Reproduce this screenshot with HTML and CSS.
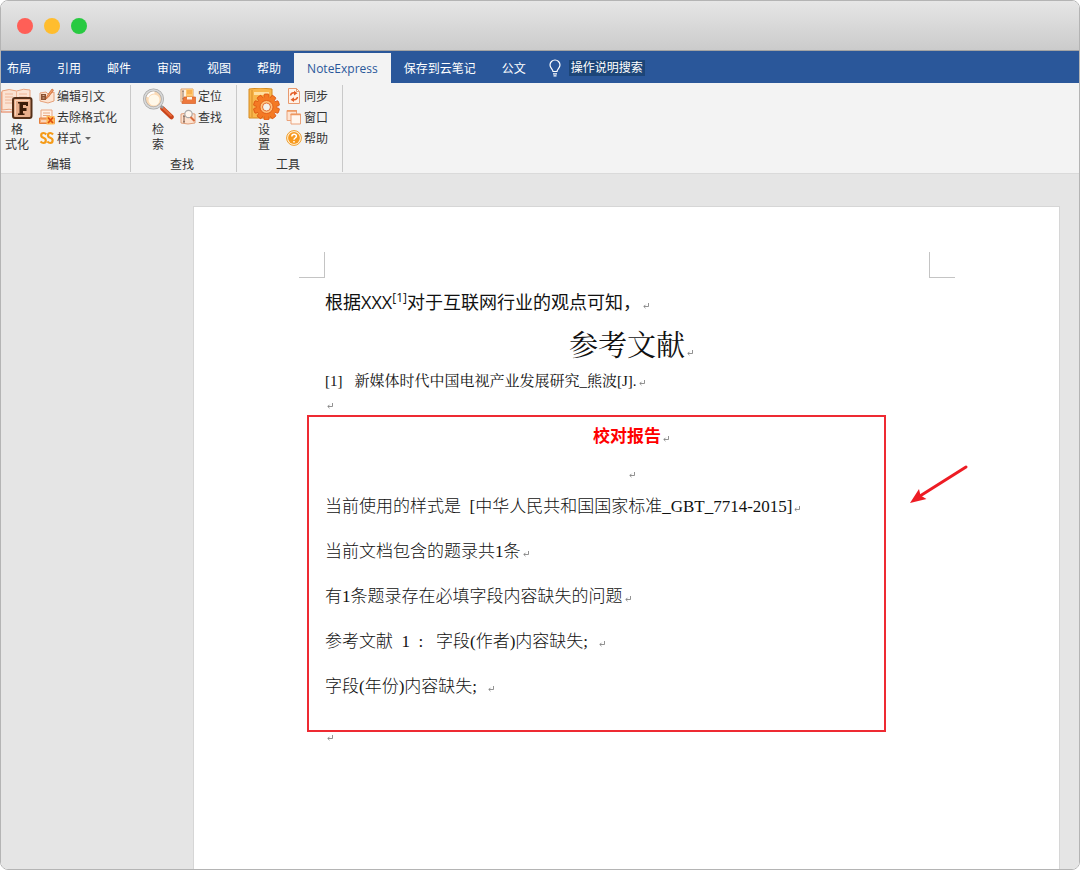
FILE: index.html
```html
<!DOCTYPE html>
<html lang="zh-CN">
<head>
<meta charset="utf-8">
<title>NoteExpress</title>
<link rel="stylesheet" href="styles.css">
</head>
<body>
<svg class="defs" aria-hidden="true">
  <symbol id="ret" viewBox="0 0 6 6"><path d="M5.500 0v3.500H1M2.500 1.800L.8 3.500l1.700 1.700" fill="none" stroke="#777" stroke-width=".8"/></symbol>
</svg>
<div class="window">
  <header class="titlebar">
    <button class="light light-red" aria-label="关闭"></button>
    <button class="light light-yellow" aria-label="最小化"></button>
    <button class="light light-green" aria-label="缩放"></button>
  </header>

  <nav class="tabs">
    <button class="tab tab-first">布局</button>
    <button class="tab">引用</button>
    <button class="tab">邮件</button>
    <button class="tab">审阅</button>
    <button class="tab">视图</button>
    <button class="tab">帮助</button>
    <button class="tab tab-active">NoteExpress</button>
    <button class="tab">保存到云笔记</button>
    <button class="tab">公文</button>
    <button class="tab tell-me">
      <svg width="12" height="18" viewBox="0 0 12 18" fill="none" stroke="#fff" stroke-width="1.200"><path d="M4 12.500c0-2-3-3.500-3-6.500a5 5 0 0 1 10 0c0 3-3 4.500-3 6.500zM4 14.800h4M4.500 16.800h3"/></svg>
      <span class="tell-text">操作说明搜索</span>
    </button>
  </nav>

  <div class="ribbon">
    <section class="group group-edit">
      <div class="tools">
        <button class="big">
          <svg width="32" height="32" viewBox="0 0 32 32">
            <path d="M1 3q7-3 14.500 0Q23 0 29 2v19q-7-1-13.500 2Q8 20 1 22z" fill="#fbe3d3" stroke="#e9a27c"/>
            <path d="M15.500 3v20M4 6h8M4 9h8M4 12h8M4 15h8M18 6h8M18 9h8" stroke="#f0b596" fill="none"/>
            <path d="M0 4v20h11" fill="none" stroke="#e7774a"/>
            <rect x="12" y="10" width="18.500" height="20" rx="2" fill="#e9ae8b" stroke="#553019" stroke-width="2"/>
            <path d="M14.500 27.500v-15H28" fill="none" stroke="#f8d5bc"/>
            <path d="M17 14h10v4h-2v-1h-3v3h3.500v3H22v2.500h1.500V27H17v-1.500h1.500v-10H17z" fill="#3b1b08"/>
          </svg>
          <span>格<br>式化</span>
        </button>
        <div class="stack">
          <button class="small">
            <svg width="16" height="16" viewBox="0 0 16 16"><path d="M1 5l6-1 2 2 6-2v9l-6 2-8-2z" fill="#fde4d2" stroke="#e5a17b"/><path d="M2 6h5v6H2z" fill="#8b5232"/><path d="M3.500 7.500h2M3.500 10h2" stroke="#d9b49c"/><path d="M7 11l1-3 5-7 1.500 1-5 7z" fill="#f1a06b" stroke="#c65c27" stroke-width=".7"/></svg>编辑引文</button>
          <button class="small">
            <svg width="16" height="16" viewBox="0 0 16 16"><path d="M2 1h11v9H2z" fill="#fff1e6" stroke="#e9a57f"/><path d="M4 4h7M4 6.500h7" stroke="#eaa77e"/><path d="M.5 9h15v5.500H.5z" fill="#f7a870" stroke="#e47f3d"/><path d="M2 12h6" stroke="#fff"/><path d="M7.500 7h8v8.500h-8z" fill="#ffbd57"/><path d="M9 8.500l5 5.500M14 8.500L9 14" stroke="#df4d12" stroke-width="1.800"/></svg>去除格式化</button>
          <button class="small">
            <svg width="16" height="16" viewBox="0 0 16 16" fill="none" stroke="#f59b18" stroke-width="2.200"><path d="M7.200 4.500Q6 3 4.500 3 2.200 3 2.200 5.200q0 1.800 2.300 2.600t2.300 2.700Q6.800 13 4.500 13 3 13 1.500 11.500M14 4.500Q12.800 3 11.300 3 9 3 9 5.200q0 1.800 2.300 2.600t2.300 2.700q0 2.500-2.300 2.500-1.500 0-3-1.500"/></svg>样式<span class="caret"></span></button>
        </div>
      </div>
      <div class="group-name">编辑</div>
    </section>

    <section class="group">
      <div class="tools">
        <button class="big">
          <svg width="32" height="32" viewBox="0 0 32 32"><path d="M20.500 20.500l9 8.500" stroke="#c9441a" stroke-width="4.500" stroke-linecap="round"/><path d="M21.500 20.500l7.500 7" stroke="#e5683a" stroke-width="2" stroke-linecap="round"/><path d="M17 16l4 4" stroke="#999" stroke-width="2.500"/><circle cx="11.500" cy="11" r="9" fill="#fbd9b4" stroke="#a8a8a8" stroke-width="3"/><circle cx="11.500" cy="11" r="9" fill="none" stroke="#d9d9d9" stroke-width="1.500"/><circle cx="12" cy="12" r="5.500" fill="#fff8e9"/><path d="M5.500 9q2-4.500 7-4.500" fill="none" stroke="#fff" stroke-width="2"/></svg>
          <span>检<br>索</span>
        </button>
        <div class="stack">
          <button class="small">
            <svg width="16" height="16" viewBox="0 0 16 16"><path d="M1 1h12v13H1z" fill="#fff0df" stroke="#df9c67"/><path d="M6 1h7v8H6z" fill="#ffc871"/><path d="M3 3v8M2 3h2M2 11h2" stroke="#76523b" stroke-width=".8"/><path d="M7 3h5M7 5h5" stroke="#f49b32"/><path d="M4 9h11.500v6.500H2z" fill="#ed783c" stroke="#d65f24" stroke-width=".7"/><path d="M7 9h5v2.500H7z" fill="#fff2e5"/></svg>定位</button>
          <button class="small">
            <svg width="16" height="16" viewBox="0 0 16 16"><path d="M1 5l6-1 8 1v9l-7 1-7-1z" fill="#fde2cf" stroke="#df9d78"/><path d="M4 7v6M3 7h2M3 13h2" stroke="#765343"/><circle cx="8.500" cy="5" r="3.700" fill="#fff6ed" stroke="#aaa" stroke-width="1.200"/><path d="M10.500 8l4 4" stroke="#d86b3c" stroke-width="2"/></svg>查找</button>
        </div>
      </div>
      <div class="group-name">查找</div>
    </section>

    <section class="group">
      <div class="tools">
        <button class="big">
          <svg width="32" height="32" viewBox="0 0 32 32">
            <path d="M1 1q11-2 23 0v29H1z" fill="#f8b64b" stroke="#d58a20"/>
            <path d="M4 2v27" stroke="#d98c24"/><path d="M6 4h15v3H6z" fill="#ffe0a0"/>
            <g transform="translate(18.500 19)" fill="#f47a24" stroke="#dc5310" stroke-width=".8">
              <rect x="-2.500" y="-13" width="5" height="26" rx="1"/><rect x="-2.500" y="-13" width="5" height="26" rx="1" transform="rotate(36)"/><rect x="-2.500" y="-13" width="5" height="26" rx="1" transform="rotate(72)"/><rect x="-2.500" y="-13" width="5" height="26" rx="1" transform="rotate(108)"/><rect x="-2.500" y="-13" width="5" height="26" rx="1" transform="rotate(144)"/>
              <circle r="10" stroke="none"/><circle r="6.500" fill="#ffc17b"/><circle r="4" fill="#f3f0eb"/>
            </g>
          </svg>
          <span>设<br>置</span>
        </button>
        <div class="stack">
          <button class="small">
            <svg width="16" height="16" viewBox="0 0 16 16"><path d="M2.500.5h8l3 3v12h-11z" fill="#fff2e8" stroke="#e89a70"/><path d="M10.500.5v3h3" fill="none" stroke="#e89a70"/><path d="M4.500 7.500q.5-3 4-2.700M11.500 9q-.5 3-4 2.700" fill="none" stroke="#e45f2a" stroke-width="1.500"/><path d="M8 2.800l3.500 2.400L8 7.500zM8 9.300l-3.500 2.400L8 14z" fill="#e45f2a"/></svg>同步</button>
          <button class="small">
            <svg width="16" height="16" viewBox="0 0 16 16"><path d="M1 1.500h9.500v10H1z" fill="#fde3d1" stroke="#eba27a"/><path d="M5 5h9.500v10H5z" fill="#fff6ef" stroke="#eba27a"/><path d="M1 2h10M4.500 5.500h10" stroke="#ee985f" stroke-width="1.500"/></svg>窗口</button>
          <button class="small">
            <svg width="16" height="16" viewBox="0 0 16 16"><circle cx="8" cy="8" r="7.400" fill="#fff1d8" stroke="#ef9d2b"/><circle cx="8" cy="8" r="5.900" fill="#f79a1f"/><path d="M5.800 6.500q0-2.300 2.300-2.300t2.300 2q0 1-1.200 1.800T8 9.700M8 11v1.500" fill="none" stroke="#fff" stroke-width="1.500"/></svg>帮助</button>
        </div>
      </div>
      <div class="group-name">工具</div>
    </section>
  </div>

  <main class="workspace">
    <article class="page">
      <div class="corners"><span class="corner corner-left"></span><span class="corner corner-right"></span></div>
      <p class="lead">根据XXX<sup>[1]</sup>对于互联网行业的观点可知，<svg class="ret"><use href="#ret"/></svg></p>
      <h1 class="title">参考文献<svg class="ret"><use href="#ret"/></svg></h1>
      <p class="entry"><span class="number">[1]</span>新媒体时代中国电视产业发展研究_熊波[J].<svg class="ret"><use href="#ret"/></svg></p>
      <p class="blank"><svg class="ret"><use href="#ret"/></svg></p>
      <section class="report">
        <h2 class="report-title">校对报告<svg class="ret"><use href="#ret"/></svg></h2>
        <p class="blank blank-center"><svg class="ret"><use href="#ret"/></svg></p>
        <p>当前使用的样式是&nbsp; [中华人民共和国国家标准_GBT_7714-2015]<svg class="ret"><use href="#ret"/></svg></p>
        <p>当前文档包含的题录共1条<svg class="ret"><use href="#ret"/></svg></p>
        <p>有1条题录存在必填字段内容缺失的问题<svg class="ret"><use href="#ret"/></svg></p>
        <p>参考文献&nbsp; 1&nbsp; :&nbsp;&nbsp; 字段(作者)内容缺失;&nbsp; <svg class="ret"><use href="#ret"/></svg></p>
        <p>字段(年份)内容缺失;&nbsp; <svg class="ret"><use href="#ret"/></svg></p>
        <div class="highlight"></div>
        <svg class="arrow" width="58" height="40" viewBox="0 0 58 40"><path d="M56 2L10 31" stroke="#ed1c24" stroke-width="3" stroke-linecap="round"/><path d="M0 38L9 24l1.500 6.500 6 3.500z" fill="#ed1c24"/></svg>
      </section>
      <p class="blank blank-after"><svg class="ret"><use href="#ret"/></svg></p>
    </article>
  </main>
</div>
</body>
</html>
```
FILE: styles.css
```css
* { box-sizing: border-box; }

body {
  margin: 0;
  background: #fff;
  font-family: "Open Sans", "Noto Sans CJK SC", sans-serif;
  font-size: 12px;
  color: #333;
}

p, h1, h2 { margin: 0; font-weight: 400; }

button {
  padding: 0;
  border: 0;
  background: none;
  color: inherit;
  font: inherit;
}

svg { flex: none; }

.defs { position: absolute; width: 0; height: 0; }

.window {
  display: flex;
  flex-direction: column;
  height: 100vh;
  border: 1px solid #b4b4b4;
  border-radius: 8px;
  overflow: hidden;
}

.titlebar {
  display: flex;
  flex: none;
  align-items: center;
  gap: 11px;
  height: 50px;
  padding-left: 16px;
  border-bottom: 1px solid #a3a3a3;
  background: linear-gradient(#e6e6e6, #cbcbcb);
}

.light { width: 16px; height: 16px; border-radius: 50%; }
.light-red { background: #ff5f57; }
.light-yellow { background: #ffbd2e; }
.light-green { background: #28ca41; }

.tabs {
  display: flex;
  flex: none;
  height: 32px;
  padding-top: 2px;
  background: #2a579a;
  color: #fff;
}

.tab { padding: 0 13px; white-space: nowrap; }
.tab-first { padding-left: 6px; }
.tab-active { background: #f3f3f3; color: #2a579a; }

.tell-me { display: flex; align-items: center; gap: 8px; padding-left: 10px; }
.tell-text { padding: 0 2px; background: #1c4578; line-height: 16px; }

.ribbon {
  display: flex;
  flex: none;
  padding: 2px 0 1px;
  border-bottom: 1px solid #dadada;
  background: #f3f3f3;
}

.group {
  padding: 1px 14px 0 11px;
  border-right: 1px solid #c9c9c9;
}

.group-edit { padding: 1px 13px 0 0; }

.tools { display: flex; gap: 6px; }

.big {
  display: flex;
  flex-direction: column;
  align-items: center;
  gap: 2px;
  width: 32px;
  padding-top: 2px;
  line-height: 15px;
}

.stack { display: flex; flex-direction: column; gap: 1px; }

.small {
  display: flex;
  align-items: center;
  gap: 2px;
  height: 20px;
  white-space: nowrap;
}

.caret {
  margin-left: 2px;
  border: 3px solid transparent;
  border-top-color: #666;
  border-bottom: 0;
}

.group-name { margin-top: 5px; line-height: 15px; text-align: center; }

.workspace {
  display: flex;
  flex: 1;
  min-height: 0;
  padding: 32px 19px 0 192px;
  background: #e5e5e5;
}

.page {
  flex: 1;
  padding: 45px 130px 0 131px;
  border: 1px solid #d6d6d6;
  border-bottom: 0;
  background: #fff;
  color: #111;
  font-family: "Liberation Serif", "Noto Serif CJK SC", serif;
}

.corners {
  display: flex;
  justify-content: space-between;
  margin: 0 -26px;
}

.corner { width: 26px; height: 26px; border-bottom: 1px solid #c4c4c4; }
.corner-left { border-right: 1px solid #c4c4c4; }
.corner-right { border-left: 1px solid #c4c4c4; }

.ret { width: 6px; height: 6px; margin: 0 -8px 0 2px; vertical-align: baseline; }

.lead {
  font-family: "Open Sans", "Noto Sans CJK SC", sans-serif;
  font-size: 18px;
  line-height: 48px;
}

.lead sup { font-size: 12px; line-height: 0; }

.title { font-size: 29px; line-height: 40px; text-align: center; }

.entry { font-size: 15px; line-height: 30px; }
.number { margin-right: 12px; }

.blank { font-size: 12px; line-height: 19px; }

.report {
  position: relative;
  padding-bottom: 23px;
  font-family: "Liberation Serif", "Noto Sans CJK SC", sans-serif;
  font-size: 17px;
  line-height: 45px;
}

.report p { font-weight: 300; }

.report-title {
  color: #f00;
  font-size: 17px;
  font-weight: 700;
  line-height: 44px;
  text-align: center;
}

.report .blank-center { padding-top: 6px; line-height: 19px; text-align: center; }

.blank-after { line-height: 11px; }

.highlight {
  position: absolute;
  inset: 0 43px 0 -18px;
  border: 2px solid #ee2a32;
}

.arrow { position: absolute; top: 50px; right: -39px; }
```
